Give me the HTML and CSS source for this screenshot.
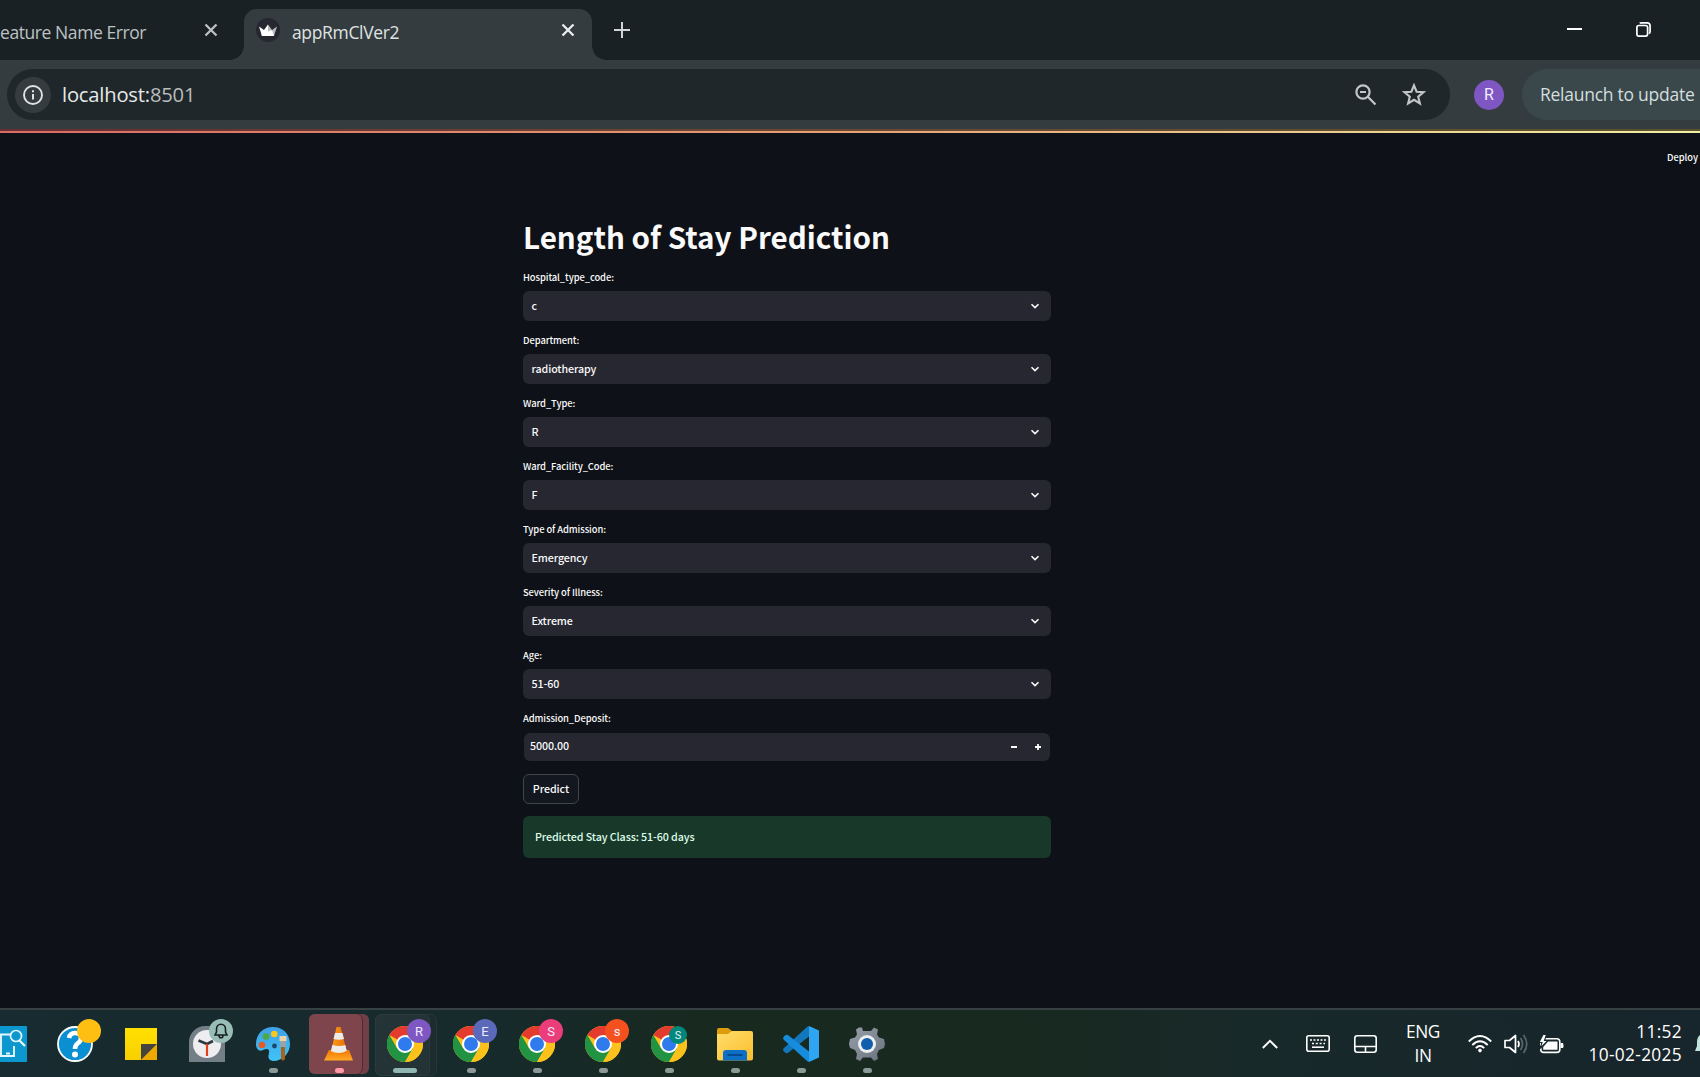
FILE: index.html
```
<!DOCTYPE html>
<html lang="en">
<head>
<meta charset="utf-8">
<title>appRmClVer2</title>
<link rel="stylesheet" href="styles.css">
</head>
<body>
<svg class="defs" width="0" height="0" aria-hidden="true">
  <defs>
    <linearGradient id="cone" x1="0" x2="1"><stop offset="0" stop-color="#ff9a1c"/><stop offset="1" stop-color="#e86f00"/></linearGradient>
    <linearGradient id="base" x1="0" y1="0" x2="0" y2="1"><stop offset="0" stop-color="#f27a00"/><stop offset="1" stop-color="#ffa726"/></linearGradient>
    <linearGradient id="note" x1="0" y1="0" x2="0" y2="1"><stop offset="0" stop-color="#ffe000"/><stop offset="1" stop-color="#f9cf00"/></linearGradient>
    <linearGradient id="paint" x1="0" y1="0" x2="0" y2="1"><stop offset="0" stop-color="#3f9fe8"/><stop offset="1" stop-color="#3fc4f5"/></linearGradient>
    <linearGradient id="folder" x1="0" y1="0" x2="1" y2="1"><stop offset="0" stop-color="#ffdc6c"/><stop offset="1" stop-color="#fbbf2d"/></linearGradient>
    <linearGradient id="gear" x1="0" y1="0" x2="1" y2="1"><stop offset="0" stop-color="#98a0aa"/><stop offset="1" stop-color="#68717d"/></linearGradient>
    <symbol id="chrome" viewBox="0 0 36 36">
      <circle cx="18" cy="18" r="18" fill="#fcc21b"/>
      <path d="M18 18 2.400 9A18 18 0 0 1 33.600 9Z" fill="#e33b2e"/>
      <path d="M2.400 9A18 18 0 0 0 18 36L26 22.500 18 18 10.200 22.500Z" fill="#229342"/>
      <path d="M18 9H33.600A18 18 0 0 1 18 36L25.800 22.500Z" fill="#fcc21b"/>
      <circle cx="18" cy="18" r="9" fill="#fff"/>
      <circle cx="18" cy="18" r="7" fill="#2f7bee"/>
    </symbol>
    <symbol id="chev" viewBox="0 0 10 8"><path d="M1.500 2.200 5 5.600 8.500 2.200" fill="none" stroke="#fafafa" stroke-width="1.600"/></symbol>
    <symbol id="x" viewBox="0 0 14 14"><path d="M1.500 1.500 12.500 12.500M12.500 1.500 1.500 12.500" fill="none" stroke="currentColor" stroke-width="2.300"/></symbol>
  </defs>
</svg>

<header class="tabs">
  <div class="tab idle"><span class="tab-title">eature Name Error</span><svg class="close"><use href="#x"/></svg></div>
  <div class="tab active">
    <svg class="favicon" viewBox="0 0 24 24"><circle cx="12" cy="12" r="12" fill="#262730"/><path d="M3 8.500 8 12 12 6.500V18H6Z" fill="#fff"/><path d="M12 6.500 16 12 21 8.500 18 18H12Z" fill="#b9babd"/><path d="M5.500 16 16 12 18 18H6Z" fill="#fff"/></svg>
    <span class="tab-title">appRmClVer2</span><svg class="close"><use href="#x"/></svg>
  </div>
  <svg class="newtab" viewBox="0 0 16 16"><path d="M8 0V16M0 8H16" stroke="#d0d4d4" stroke-width="2"/></svg>
  <div class="window-buttons">
    <svg width="15" height="2"><path d="M0 1H15" stroke="#fff" stroke-width="2"/></svg>
    <svg width="15" height="15" viewBox="0 0 15 15" fill="none" stroke="#fff" stroke-width="1.700"><rect x=".9" y="3.500" width="10.700" height="10.600" rx="2"/><path d="M3.800 1.400Q4.200.9 5.500.9H11Q14.100.9 14.100 4V9.500Q14.100 11 13 11.600"/></svg>
  </div>
</header>

<nav class="toolbar">
  <div class="omnibox">
    <div class="info"><svg width="20" height="20" viewBox="0 0 20 20"><circle cx="10" cy="10" r="9" fill="none" stroke="#dfe2e2" stroke-width="1.900"/><path d="M10 9V14.500M10 5.300V7.300" stroke="#dfe2e2" stroke-width="2"/></svg></div>
    <span class="url">localhost:<span class="port">8501</span></span>
    <svg class="zoom" width="22" height="22" viewBox="0 0 22 22" fill="none" stroke="#c3c6c6" stroke-width="2.200"><circle cx="8" cy="8" r="6.600"/><path d="M12.800 12.800 20.500 20.500M5 8H11"/></svg>
    <svg class="star" width="24" height="23" viewBox="0 0 24 23" fill="none" stroke="#c3c6c6" stroke-width="2.100"><path d="M12 2.300 14.600 8.700 21.500 9.200 16.200 13.700 17.900 20.400 12 16.800 6.100 20.400 7.800 13.700 2.500 9.200 9.400 8.700Z"/></svg>
  </div>
  <div class="avatar">R</div>
  <div class="relaunch"><span>Relaunch to update</span></div>
</nav>

<main class="app">
  <div class="decoration"></div>
  <div class="deploy"><span>Deploy</span></div>
  <div class="form">
    <h1>Length of Stay Prediction</h1>
    <div class="field"><label>Hospital_type_code:</label><div class="select"><span>c</span><svg><use href="#chev"/></svg></div></div>
    <div class="field"><label>Department:</label><div class="select"><span>radiotherapy</span><svg><use href="#chev"/></svg></div></div>
    <div class="field"><label>Ward_Type:</label><div class="select"><span>R</span><svg><use href="#chev"/></svg></div></div>
    <div class="field"><label>Ward_Facility_Code:</label><div class="select"><span>F</span><svg><use href="#chev"/></svg></div></div>
    <div class="field"><label>Type of Admission:</label><div class="select"><span>Emergency</span><svg><use href="#chev"/></svg></div></div>
    <div class="field"><label>Severity of Illness:</label><div class="select"><span>Extreme</span><svg><use href="#chev"/></svg></div></div>
    <div class="field"><label>Age:</label><div class="select"><span>51-60</span><svg><use href="#chev"/></svg></div></div>
    <div class="field"><label>Admission_Deposit:</label><div class="select number"><span>5000.00</span>
      <svg class="step" viewBox="0 0 30 8"><path d="M0 4H6M24 4H30M27 1V7" stroke="#fafafa" stroke-width="1.800"/></svg></div></div>
    <button class="predict">Predict</button>
    <div class="success">Predicted Stay Class: 51-60 days</div>
  </div>
</main>

<footer class="taskbar">
  <div class="apps">
    <div class="cell"><svg width="36" height="36" viewBox="0 0 36 36"><path d="M0 0H36V36H0Z" fill="#0c97cf"/><path d="M20 8.500H10V30H23V20M15 27.500H19" fill="none" stroke="#e6f6fd" stroke-width="1.900"/><circle cx="25" cy="10" r="5.500" fill="#0c97cf" stroke="#e6f6fd" stroke-width="1.700"/><path d="M28 14 34 20" stroke="#e6f6fd" stroke-width="2.200"/></svg></div>
    <div class="cell"><svg width="36" height="36" viewBox="0 0 36 36"><circle cx="18" cy="18" r="17" fill="#0a8fd3" stroke="#fff" stroke-width="1.800"/><path d="M12 12Q13 7 18 7 24 7 24 12.500 24 15 20.500 17.500 18 19.500 18 23" fill="none" stroke="#fff" stroke-width="4.600"/><circle cx="18" cy="28.500" r="3" fill="#fff"/></svg><i class="badge plain"></i></div>
    <div class="cell"><svg width="36" height="36" viewBox="0 0 36 36"><path d="M2 2H34V18L18 34H2Z" fill="url(#note)"/><path d="M18 34V18H34Z" fill="#45433f"/><path d="M18 34 34 18V34Z" fill="#eda900"/></svg></div>
    <div class="cell"><svg width="36" height="36" viewBox="0 0 36 36"><path d="M0 36V16A16 16 0 0 1 16 0H36V36Z" fill="#747e86"/><circle cx="18" cy="18" r="14" fill="#eeeef0"/><path d="M9.500 14.500 18 18 24 15" fill="none" stroke="#303840" stroke-width="2.700"/><path d="M18 18V30" stroke="#e0431b" stroke-width="2.200"/></svg><i class="badge bell"><svg width="14" height="16" viewBox="0 0 14 16" fill="none" stroke="#17211f" stroke-width="1.600"><path d="M1 12H13L11.500 9V6A4.500 4.700 0 0 0 2.500 6V9ZM5 12.500Q5 14.800 7 14.800T9 12.500"/></svg></i></div>
    <div class="cell"><svg width="36" height="36" viewBox="0 0 36 36"><path d="M18 1C8 1 1 8 1 18 1 23 4 26 8 24 12 22 15 23 14 27 13 31 13 34 18 35 28 35 35 27 35 18 35 8 28 1 18 1Z" fill="url(#paint)"/><circle cx="7" cy="19" r="3.300" fill="#e55a25"/><circle cx="11" cy="10.500" r="3.300" fill="#4caa3d"/><circle cx="19.300" cy="8" r="3.300" fill="#f8c61c"/><circle cx="19.500" cy="20" r="2.400" fill="#1b4669"/><path d="M26 20H30V33Q28 36 26 33Z" fill="#a8631b"/><path d="M25 15H31L30.500 21H25.500Z" fill="#9aa5aa"/><path d="M24.500 10H31.500V15H24.500Z" fill="#efd2a9"/></svg><b></b></div>
    <div class="cell vlc"><svg width="36" height="36" viewBox="0 0 36 36"><path d="M8 24H28L32 34.500H3Z" fill="url(#base)"/><path d="M15.500 1H19.500L26 26Q18 30 10 26Z" fill="url(#cone)"/><path d="M14 7H21.500L23 13Q18 14.500 12.500 13ZM11.300 19Q18 21 24.300 19L25.800 25Q18 29 10 25Z" fill="#ebebe8"/></svg><b></b></div>
    <div class="cell current"><svg width="36" height="36"><use href="#chrome"/></svg><i class="badge r">R</i><b></b></div>
    <div class="cell"><svg width="36" height="36"><use href="#chrome"/></svg><i class="badge e">E</i><b></b></div>
    <div class="cell"><svg width="36" height="36"><use href="#chrome"/></svg><i class="badge s">S</i><b></b></div>
    <div class="cell"><svg width="36" height="36"><use href="#chrome"/></svg><i class="badge o">s</i><b></b></div>
    <div class="cell"><svg width="36" height="36"><use href="#chrome"/></svg><i class="badge t">S</i><b></b></div>
    <div class="cell"><svg width="36" height="36" viewBox="0 0 36 36"><path d="M0 4Q0 2 2 2H11L15 5V10H0Z" fill="#dc9c0c"/><path d="M0 8H11L15 5H34Q36 5 36 7V32.500Q36 34.500 34 34.500H2Q0 34.500 0 32.500Z" fill="url(#folder)"/><path d="M6 34.500V27Q6 24 9 24H27Q30 24 30 27V34.500Z" fill="#0d6fc5"/><path d="M10.500 29H25.500" stroke="#073e77" stroke-width="1.500"/></svg><b></b></div>
    <div class="cell"><svg width="36" height="36" viewBox="0 0 36 36"><path d="M26 0 36 4.500V31.500L26 36Z" fill="#2fa4f0"/><path d="M26 0V10.500L5.500 26.500Q3.500 28 2 26.500L.6 25Q-.6 23.500 1 22L24 1Z" fill="#1277bd"/><path d="M26 36V25.500L5.500 9.500Q3.500 8 2 9.500L.6 11Q-.6 12.500 1 14L24 35Z" fill="#178cdd"/></svg><b></b></div>
    <div class="cell"><svg width="36" height="36" viewBox="0 0 36 36"><path d="M13 1.500H10L7 3.500 8 8.500 6 11.500 1 13 0 18 1 22 6 24 8 28 7 33 11 35 14 31.500H22L25 35 29 33 28 28 30 24 35 22 36 18 35 13 30 11.500 28 8.500 29 3.500 25 1.500 22 5H14Z" fill="url(#gear)"/><circle cx="18" cy="18" r="9" fill="#eceef0"/><circle cx="18" cy="18" r="6" fill="#0f5dac"/></svg><b></b></div>
  </div>
  <div class="tray">
    <svg class="up" width="16" height="10" viewBox="0 0 16 10"><path d="M.8 9 8 1.800 15.200 9" fill="none" stroke="#fff" stroke-width="1.900"/></svg>
    <svg class="keys" width="24" height="17" viewBox="0 0 24 17" fill="none" stroke="#fff" stroke-width="1.600"><rect x=".8" y=".8" width="22.400" height="15.400" rx="2"/><path d="M4 5H20" stroke-dasharray="2 1.500"/><path d="M6 8.500H19" stroke-dasharray="2 1.800"/><path d="M6 12.200H18"/></svg>
    <svg class="pad" width="23" height="18" viewBox="0 0 23 18" fill="none" stroke="#fff" stroke-width="1.600"><rect x=".8" y=".8" width="21.400" height="16.400" rx="2.500"/><path d="M1 11.500H22M11.500 11.500V17"/></svg>
    <div class="lang">ENG<br>IN</div>
    <svg class="wifi" width="24" height="18" viewBox="0 0 24 18" fill="none" stroke="#fff" stroke-width="1.900"><path d="M.8 6.500Q12-4.500 23.200 6.500M4.300 10Q12 2.500 19.700 10M7.800 13.200Q12 9 16.200 13.200"/><circle cx="12" cy="15.500" r="1.400" fill="#fff" stroke-width="1"/></svg>
    <svg class="sound" width="24" height="20" viewBox="0 0 24 20" fill="none" stroke="#fff" stroke-width="1.700"><path d="M1 6.500H5.500L11.500 1.500V18.500L5.500 13.500H1Z" stroke-linejoin="round"/><path d="M14 7Q16 10 14 13"/><path d="M16.500 4Q20.500 10 16.500 16M19.500 1Q26 10 19.500 19" stroke="#59666a"/></svg>
    <svg class="battery" width="25" height="20" viewBox="0 0 25 20"><rect x="1.800" y="4.800" width="19" height="13.600" rx="3" fill="none" stroke="#fff" stroke-width="1.600"/><path d="M21.500 9H24Q25 11.500 24 14H21.500Z" fill="#fff"/><path d="M9 7.500H18.500V15.800H4.200V13Z" fill="#fff"/><path d="M4 .5 0 8.500H3L1 14.500 9 6.500H5.500L7.500.5Z" fill="#fff" stroke="#17272b" stroke-width="1.100"/></svg>
    <div class="clock">11:52<br>10-02-2025</div>
    <svg class="notify" width="5" height="18" viewBox="0 0 5 18"><path d="M0 16 2 11V7Q2 2 5 0V16Z" fill="#bfe3dd"/></svg>
  </div>
</footer>
</body>
</html>
```
FILE: styles.css
```
* { box-sizing: border-box; }
body {
  margin: 0;
  width: 1700px;
  height: 1077px;
  overflow: hidden;
  display: flex;
  flex-direction: column;
  background: #0e1117;
  font-family: "Open Sans", "Noto Sans", sans-serif;
  color: #dfe3e3;
}
svg { display: block; flex: none; }
.defs { position: absolute; }

.tabs { height: 60px; flex: none; display: flex; background: #1a2124; font-size: 17.5px; }
.tab { display: flex; align-items: center; height: 51px; margin-top: 9px; padding-bottom: 9px; }
.tab-title { white-space: nowrap; padding-top: 3px; }
.idle { width: 244px; color: #bcc2c3; }
.idle .close { margin-left: 58px; }
.idle .tab-title { width: 146px; letter-spacing: -.42px; }
.active { position: relative; width: 348px; padding-left: 12px; border-radius: 13px 13px 0 0; background: #353c3f; }
.active::before, .active::after { content: ""; position: absolute; bottom: 0; width: 14px; height: 14px; }
.active::before { left: -14px; background: radial-gradient(circle at 0 0, transparent 13.5px, #353c3f 14px); }
.active::after { right: -14px; background: radial-gradient(circle at 100% 0, transparent 13.5px, #353c3f 14px); }
.active .tab-title { width: 107px; margin-left: 12px; letter-spacing: -.35px; }
.active .close { margin-left: auto; margin-right: 17px; color: #eceeee; }
.favicon { width: 24px; height: 24px; }
.close { width: 14px; height: 14px; }
.newtab { width: 16px; height: 16px; margin: 22px 0 0 22px; }
.window-buttons { display: flex; align-items: center; gap: 54px; height: 58px; margin: 0 49px 0 auto; }

.toolbar { height: 69px; flex: none; display: flex; align-items: center; padding: 0 0 0 7px; background: #353c3f; }
.omnibox { display: flex; align-items: center; width: 1443px; height: 51px; padding: 0 24px 0 8px; border-radius: 26px; background: #1f272a; }
.info { display: flex; align-items: center; justify-content: center; width: 36px; height: 36px; border-radius: 50%; background: #353c3f; }
.url { margin-left: 11px; font-size: 20.2px; letter-spacing: -.2px; padding-bottom: 1px; color: #e6e9e9; }
.port { color: #b8bdbd; }
.zoom { margin-left: auto; }
.star { margin-left: 25px; }
.avatar { display: flex; align-items: center; justify-content: center; width: 30px; height: 30px; margin-left: 24px; border-radius: 50%; background: #7e57c2; color: #f2ecff; font: 16px Roboto, sans-serif; }
.relaunch { flex: 1; height: 51px; margin-left: 18px; padding: 0 0 1px 18px; display: flex; align-items: center; border-radius: 26px 0 0 26px; background: #3a484b; color: #d3dede; font-size: 17.5px; letter-spacing: -.26px; white-space: nowrap; }

.app { flex: 1; display: flex; flex-direction: column; font-family: "Noto Sans CJK JP", sans-serif; font-weight: 500; color: #fafafa; }
.decoration {
  height: 4px;
  flex: none;
  background:
    linear-gradient(90deg, #662f31, #6b4733 45%, #5a522f) top / 100% 2px no-repeat,
    linear-gradient(90deg, #d96b67, #e59a73 45%, #f0f0a2) bottom / 100% 2px no-repeat;
}
.deploy { height: 47px; display: flex; align-items: center; justify-content: flex-end; padding-right: 2px; font-size: 9.3px; }
.form { width: 528px; margin: 38px 0 0 523px; display: flex; flex-direction: column; }
h1 { height: 52px; margin: 0; font-size: 29.6px; line-height: 37px; font-weight: 700; white-space: nowrap; }
.field { height: 63px; }
label { display: block; height: 21px; font-size: 9.4px; line-height: 15px; letter-spacing: -.08px; }
.select { height: 30px; display: flex; align-items: center; justify-content: space-between; padding: 0 11px 1px 8.5px; border-radius: 6px; background: #262730; font-size: 10.7px; line-height: 16px; letter-spacing: -.1px; }
.select svg { width: 10px; height: 8px; }
.number { height: 28px; margin: 1px 1px 0; padding: 0 9px 3px 6px; }
.number .step { width: 30px; height: 8px; margin-top: 2px; }
.predict { width: 56px; height: 30px; padding: 0 0 1px; border: 1px solid #41444c; border-radius: 6px; background: #131720; color: #fafafa; font: 500 10.7px/16px "Noto Sans CJK JP", sans-serif; letter-spacing: -.06px; }
.success { height: 42px; margin-top: 12px; padding-left: 12px; border-radius: 6px; background: #183929; color: #dffde9; font-size: 10.7px; line-height: 41px; letter-spacing: -.1px; }

.taskbar { height: 69px; flex: none; display: flex; border-top: 2px solid #374144; background: linear-gradient(90deg, #172b30, #172a2c 28%, #18291f 42%, #18291f 58%, #18292a 75%, #17252c); }
.apps { display: flex; margin-left: -24px; }
.cell { position: relative; width: 66px; height: 67px; flex: none; display: flex; justify-content: center; padding-top: 16px; }
.cell > svg { position: relative; }
.cell b { position: absolute; left: 28.5px; bottom: 4px; width: 9px; height: 5px; border-radius: 3px; background: #8c9997; }
.badge { position: absolute; left: 35px; top: 9px; width: 24px; height: 24px; display: flex; align-items: center; justify-content: center; border-radius: 50%; font: normal 13px Roboto, sans-serif; color: #f0eaff; }
.plain { background: #ffbf12; }
.bell { background: #98bdb7; }
.r { background: #7e57c2; }
.e { background: #5b69bb; }
.s { background: #ea3d79; }
.o { background: #f4511e; }
.t { left: 33px; top: 16px; width: 18px; height: 18px; font-size: 11px; background: #00897b; }
.vlc::before, .current::before, .vlc::after, .current::after { content: ""; position: absolute; top: 4px; height: 60px; border-radius: 6px; }
.vlc::before { left: 3px; width: 60px; background: #733f46; }
.vlc::after { left: 3px; width: 53px; background: #7f454c; box-shadow: 1px 0 0 #472e33; }
.vlc > svg { z-index: 1; }
.vlc b { background: #ff9ba5; z-index: 2; }
.current::before { left: 3px; width: 60px; background: #1d2d2f; border: 1px solid #273638; }
.current::after { left: 3px; width: 53px; background: #233336; border: 1px solid #2b3a3d; }
.current > svg { z-index: 1; }
.current .badge { z-index: 2; }
.current b { left: 21px; width: 24px; background: #91b7b1; z-index: 2; }

.tray { display: flex; align-items: center; margin-left: auto; height: 67px; color: #fff; font-size: 17.3px; line-height: 23.5px; white-space: nowrap; }
.keys { margin-left: 28px; }
.pad { margin-left: 24px; }
.lang { width: 50px; margin-left: 21px; text-align: center; letter-spacing: -.4px; }
.wifi { margin-left: 20px; }
.sound { margin-left: 12px; }
.battery { margin-left: 11px; }
.clock { width: 110px; margin-left: 8px; text-align: right; letter-spacing: .33px; padding-bottom: 1px; }
.notify { margin-left: 13px; }
```
